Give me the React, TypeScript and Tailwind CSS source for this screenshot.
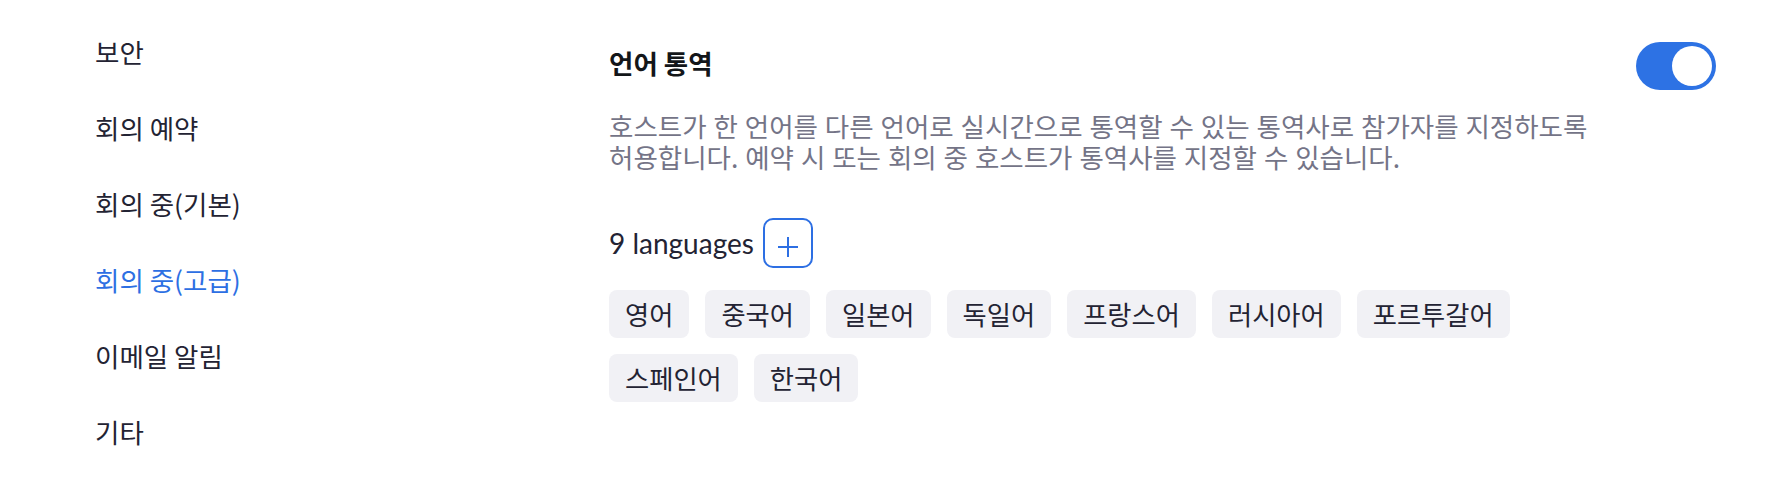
import { useState } from 'react';

const navItems = ['보안', '회의 예약', '회의 중(기본)', '회의 중(고급)', '이메일 알림', '기타'];

const languages = ['영어', '중국어', '일본어', '독일어', '프랑스어', '러시아어', '포르투갈어', '스페인어', '한국어'];

function Toggle({ on, onChange }: { on: boolean; onChange: (v: boolean) => void }) {
  return (
    <button
      type="button"
      role="switch"
      aria-checked={on}
      onClick={() => onChange(!on)}
      className={`flex h-12 w-20 shrink-0 items-center rounded-full p-1 transition-colors ${
        on ? 'justify-end bg-[#2d72e4]' : 'justify-start bg-[#bfbfc9]'
      }`}
    >
      <span className="h-10 w-10 rounded-full bg-white" />
    </button>
  );
}

export default function App() {
  const [active, setActive] = useState('회의 중(고급)');
  const [enabled, setEnabled] = useState(true);

  return (
    <div className="flex min-h-[486px] w-full bg-white font-['Noto_Sans_CJK_KR','Noto_Sans',sans-serif] text-[#232333]">
      <nav className="flex w-[609px] shrink-0 flex-col pl-[95px] pt-[14px]">
        {navItems.map((item) => (
          <button
            key={item}
            type="button"
            onClick={() => setActive(item)}
            className={`py-6 text-left text-[26.5px] leading-[28px] ${
              active === item ? 'text-[#2d6fe3]' : 'text-[#232333]'
            }`}
          >
            {item}
          </button>
        ))}
      </nav>

      <main className="flex flex-1 flex-col pr-[52px] pt-[42px]">
        <div className="flex items-start justify-between">
          <h2 className="mt-[5px] text-[26.5px] font-bold leading-8 text-[#131619]">언어 통역</h2>
          <Toggle on={enabled} onChange={setEnabled} />
        </div>

        <p className="mt-[20px] max-w-[1000px] break-keep text-[26.5px] leading-[31px] text-[#747487] [word-spacing:1px]">
          호스트가 한 언어를 다른 언어로 실시간으로 통역할 수 있는 통역사로 참가자를 지정하도록 허용합니다. 예약 시
          또는 회의 중 호스트가 통역사를 지정할 수 있습니다.
        </p>

        <div className="mt-[46px] flex items-center gap-[9px]">
          <span className="font-['Lato',sans-serif] text-[28px] leading-none text-[#232333]">9 languages</span>
          <button
            type="button"
            aria-label="Add language"
            className="flex h-[50px] w-[50px] items-center justify-center rounded-[10px] border-2 border-[#2d6fe3] pt-[8px]"
          >
            <svg width="20" height="20" viewBox="0 0 20 20" fill="none" stroke="#2d6fe3" strokeWidth="2">
              <path d="M10 0v20M0 10h20" />
            </svg>
          </button>
        </div>

        <div className="mt-[22px] flex max-w-[960px] flex-wrap gap-4">
          {languages.map((lang) => (
            <span
              key={lang}
              className="rounded-lg bg-[#f1f1f5] px-4 py-[10px] text-[26.3px] leading-7 text-[#232333]"
            >
              {lang}
            </span>
          ))}
        </div>
      </main>
    </div>
  );
}
